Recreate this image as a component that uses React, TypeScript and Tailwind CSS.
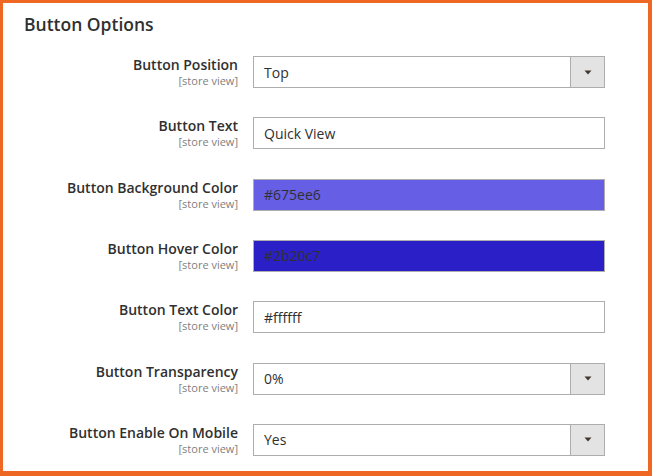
import React from 'react'

type Field = {
  label: string
  value: string
  kind: 'select' | 'text' | 'color'
  bg?: string
}

const fields: Field[] = [
  { label: 'Button Position', value: 'Top', kind: 'select' },
  { label: 'Button Text', value: 'Quick View', kind: 'text' },
  { label: 'Button Background Color', value: '#675ee6', kind: 'color', bg: 'bg-[#675ee6]' },
  { label: 'Button Hover Color', value: '#2b20c7', kind: 'color', bg: 'bg-[#2b20c7]' },
  { label: 'Button Text Color', value: '#ffffff', kind: 'text' },
  { label: 'Button Transparency', value: '0%', kind: 'select' },
  { label: 'Button Enable On Mobile', value: 'Yes', kind: 'select' },
]

function Control({ field }: { field: Field }) {
  const base =
    'flex h-[32px] w-[352px] items-center border border-[#adadad] text-[14px] text-[#303030]'
  if (field.kind === 'select') {
    return (
      <div className={`${base} bg-white`}>
        <span className="flex-1 pl-[10px]">{field.value}</span>
        <span className="flex h-full w-[34px] items-center justify-center border-l border-[#adadad] bg-[#e3e3e3]">
          <svg width="8" height="5" viewBox="0 0 8 5">
            <path d="M0.5 0.5 L7.5 0.5 L4 4.5 Z" fill="#41362f" />
          </svg>
        </span>
      </div>
    )
  }
  return (
    <div className={`${base} ${field.bg ?? 'bg-white'}`}>
      <span className="pl-[10px]">{field.value}</span>
    </div>
  )
}

export default function App() {
  return (
    <div
      className="h-[476px] w-[652px] border-t-[3px] border-l-[3px] border-r-4 border-b-[5px] border-[#ee6723] bg-white text-[#303030]"
      style={{ fontFamily: '"Open Sans", "Liberation Sans", sans-serif' }}
    >
      <h2 className="pl-[21px] pt-[8px] text-[17.5px] font-semibold leading-[26px] text-[#303030]">
        Button Options
      </h2>

      <div className="mt-[19px] flex flex-col gap-[29.33px]">
        {fields.map((f) => (
          <div key={f.label} className="flex h-[32px] items-start">
            <div className="-mt-[1px] flex w-[250px] flex-col items-end pr-[15px]">
              <span className="text-[14px] font-semibold leading-[19px]">{f.label}</span>
              <span className="text-[11px] leading-[13px] text-[#808080]">[store view]</span>
            </div>
            <Control field={f} />
          </div>
        ))}
      </div>
    </div>
  )
}
